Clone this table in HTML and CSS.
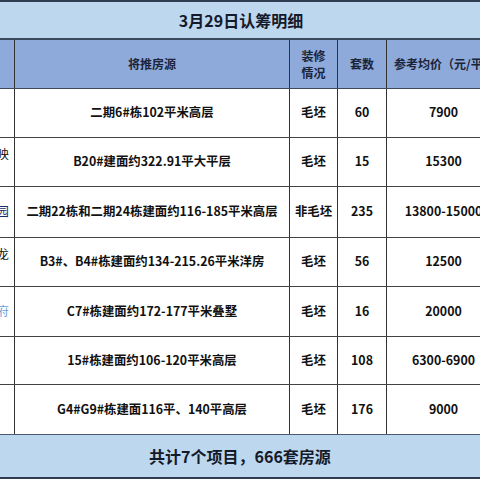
FILE: index.html
```html
<!DOCTYPE html>
<html lang="zh">
<head>
<meta charset="utf-8">
<link rel="stylesheet" href="styles.css">
</head>
<body>
<div class="sheet">
  <div class="title">3月29日认筹明细</div>
  <div class="grid">
    <table class="tbl">
      <colgroup>
        <col class="c1"><col class="c2"><col class="c3"><col class="c4"><col class="c5">
      </colgroup>
      <thead>
        <tr class="head">
          <th></th>
          <th>将推房源</th>
          <th>装修情况</th>
          <th>套数</th>
          <th class="wide">参考均价（元/平米）</th>
        </tr>
      </thead>
      <tbody>
        <tr class="r1"><td class="name"></td><td>二期6#栋102平米高层</td><td>毛坯</td><td>60</td><td>7900</td></tr>
        <tr class="r2"><td class="name up">山映</td><td>B20#建面约322.91平大平层</td><td>毛坯</td><td>15</td><td>15300</td></tr>
        <tr class="r3"><td class="name navy">花园</td><td>二期22栋和二期24栋建面约116-185平米高层</td><td>非毛坯</td><td>235</td><td>13800-15000</td></tr>
        <tr class="r4"><td class="name up">九龙</td><td>B3#、B4#栋建面约134-215.26平米洋房</td><td>毛坯</td><td>56</td><td>12500</td></tr>
        <tr class="r5"><td class="name link">府</td><td>C7#栋建面约172-177平米叠墅</td><td>毛坯</td><td>16</td><td>20000</td></tr>
        <tr class="r6"><td class="name"></td><td>15#栋建面约106-120平米高层</td><td>毛坯</td><td>108</td><td>6300-6900</td></tr>
        <tr class="r7"><td class="name"></td><td>G4#G9#栋建面116平、140平高层</td><td>毛坯</td><td>176</td><td>9000</td></tr>
      </tbody>
    </table>
  </div>
  <div class="footer">共计7个项目，666套房源</div>
</div>
</body>
</html>
```

FILE: styles.css
```css
html, body {
  margin: 0;
  padding: 0;
  background: #ffffff;
}

.sheet {
  width: 480px;
  height: 480px;
  overflow: hidden;
  font-family: "Noto Sans CJK SC", "Microsoft YaHei", "Noto Sans", sans-serif;
  font-weight: 700;
  color: #111111;
  display: flex;
  flex-direction: column;
}

.title {
  height: 36px;
  flex: none;
  border-top: 2px solid #2e3d4f;
  border-bottom: 2px solid #3a4a5e;
  background: #bdd7ee;
  font-size: 16px;
  line-height: 36px;
  text-align: center;
  color: #141a2a;
  padding-left: 2px;
}

.grid {
  flex: none;
  overflow: hidden;
  height: 394px;
}

.tbl {
  margin-left: -47px;
  border-collapse: collapse;
  table-layout: fixed;
  width: 547px;
  font-size: 12.4px;
}

.c1 { width: 61px; }
.c2 { width: 275px; }
.c3 { width: 48px; }
.c4 { width: 49px; }
.c5 { width: 114px; }

.tbl th,
.tbl td {
  border-left: 1px solid #333333;
  border-right: 1px solid #333333;
  border-bottom: 1px solid #444444;
  padding: 0 6px;
  text-align: center;
  vertical-align: middle;
  line-height: 17px;
}

.head { height: 48px; }

.head th {
  background: #8eaadb;
  color: #1b2438;
  font-weight: 700;
  font-size: 12px;
  border-bottom: 1px solid #3e4a5c;
}

.head th.wide {
  white-space: nowrap;
  overflow: hidden;
  text-align: left;
  padding-left: 7px;
}

.tbl td {
  white-space: nowrap;
  overflow: hidden;
}

.tbl td:nth-child(3) {
  white-space: normal;
  padding: 0 4px;
}

.r1 { height: 49px; }
.r2 { height: 49px; }
.r3 { height: 51px; }
.r4 { height: 49px; }
.r5 { height: 50px; }
.r6 { height: 48px; }
.r7 { height: 50px; }

.tbl td.name {
  text-align: right;
  padding-right: 5px;
  font-weight: 400;
}

.tbl td.up { vertical-align: top; padding-top: 8px; }
.tbl td.navy { color: #1a2a6a; }
.tbl td.link { color: #6f9fd6; }

.footer {
  flex: none;
  height: 42px;
  border-top: 1px solid #4a5a70;
  border-bottom: 2px solid #2e3d4f;
  background: #bdd7ee;
  font-size: 16px;
  line-height: 42px;
  text-align: center;
  color: #141a2a;
}
```
